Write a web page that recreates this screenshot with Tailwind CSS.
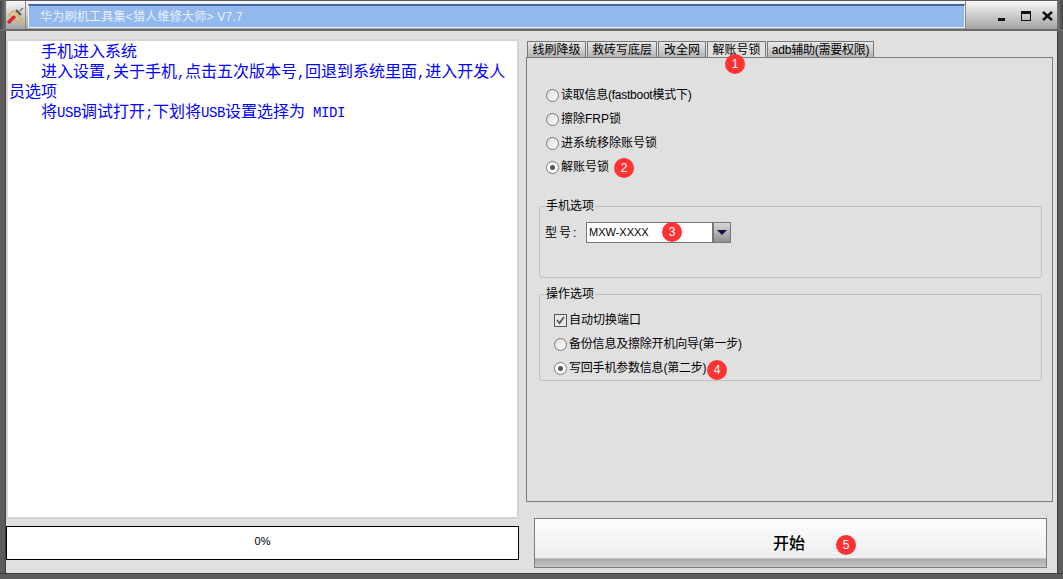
<!DOCTYPE html>
<html lang="zh-CN">
<head>
    <meta charset="UTF-8">
    <title>华为刷机工具集</title>
    <script src="https://cdn.jsdelivr.net/npm/@tailwindcss/browser@4"></script>
</head>
<body class="w-[1063px] h-[579px] overflow-hidden bg-[#5c5c5c] font-['Liberation_Sans','Noto_Sans_CJK_SC',sans-serif] text-[12px] text-black">

<div class="relative w-[1063px] h-[579px] flex flex-col">

    <!-- title bar -->
    <div class="h-[31px] shrink-0 flex border-t border-[#5c5c5c] bg-gradient-to-b from-[#f8f8f8] to-[#a4a4a4] border-b-2 border-b-[#6a6a6a]">
        <div class="w-[6px] bg-gradient-to-r from-[#444] to-[#777]"></div>
        <div class="w-[19px] flex items-center justify-center">
            <svg width="19" height="19" viewBox="0 0 19 19">
                <path d="M3 9 L13 17 L16 14 L7 5 Z" fill="none" stroke="#d8b060" stroke-width="1.6"/>
                <path d="M2 17 L9 10" stroke="#d8262a" stroke-width="3.2"/>
                <path d="M9 10 L12 7" stroke="#e8c070" stroke-width="2.4"/>
                <path d="M10 4 L15 9" stroke="#555" stroke-width="2.2"/>
                <path d="M14 5 L17 2" stroke="#777" stroke-width="1.4"/>
            </svg>
        </div>
        <div class="w-[3px] border-l border-[#888]"></div>
        <div class="w-[937px] h-[24px] mt-[3px] border border-[#eaf1fb] border-t-2 border-t-[#3f68a8] bg-[#92b8ee] flex items-center pl-[11px] text-[12px] tracking-[0.25px] text-[#e8f0fc] leading-none">华为刷机工具集&lt;猎人维修大师&gt; V7.7</div>
        <div class="flex-1 relative border-l border-[#888]">
            <div class="absolute left-[32px] top-[17px] w-[7px] h-[3px] bg-[#111]"></div>
            <div class="absolute left-[55px] top-[10px] w-[10px] h-[10px] border border-[#111] border-t-[3px]"></div>
            <svg class="absolute left-[76px] top-[10px]" width="11" height="10" viewBox="0 0 11 10"><path d="M1 1 L10 9 M10 1 L1 9" stroke="#111" stroke-width="2.4"/></svg>
        </div>
        <div class="w-[6px] bg-gradient-to-r from-[#777] to-[#444]"></div>
    </div>

    <!-- client area -->
    <div class="h-[542px] shrink-0 flex mx-[5px] bg-[#e0e0e0] border-x border-[#3c3c3c]">

        <div class="w-[513px] pt-[8px] flex flex-col">
            <div class="h-[480px] bg-white border-2 border-[#d4d4d8] text-[#0000ff] text-[16px] leading-[20px] pl-[1px] pr-[11px] font-['Noto_Sans_CJK_SC',sans-serif]">
                <p class="indent-[32px] -mt-[1px]">手机进入系统</p>
                <p class="indent-[32px]">进入设置<span class="font-['Liberation_Mono'] text-[14px] leading-none tracking-[-0.4px]">,</span>关于手机<span class="font-['Liberation_Mono'] text-[14px] leading-none tracking-[-0.4px]">,</span>点击五次版本号<span class="font-['Liberation_Mono'] text-[14px] leading-none tracking-[-0.4px]">,</span>回退到系统里面<span class="font-['Liberation_Mono'] text-[14px] leading-none tracking-[-0.4px]">,</span>进入开发人员选项</p>
                <p class="indent-[32px]">将<span class="font-['Liberation_Mono'] text-[14px] leading-none tracking-[-0.4px]">USB</span>调试打开<span class="font-['Liberation_Mono'] text-[14px] leading-none tracking-[-0.4px]">;</span>下划将<span class="font-['Liberation_Mono'] text-[14px] leading-none tracking-[-0.4px]">USB</span>设置选择为<span class="font-['Liberation_Mono'] text-[14px] leading-none tracking-[-0.4px]"> MIDI</span></p>
            </div>
            <div class="mt-[7px] h-[34px] pb-[3px] bg-white border border-black flex items-center justify-center text-[11px]">0%</div>
        </div>

        <div class="w-[529px] ml-[7px] pt-[10px] flex flex-col">
            <div class="flex h-[16px] pl-[1px] gap-[1px] text-[12px] leading-[17px] text-center">
                <div class="w-[59px] bg-gradient-to-b from-[#e8e8e8] to-[#b4b4b4] border border-b-0 border-[#777]">线刷降级</div>
                <div class="w-[70px] bg-gradient-to-b from-[#e8e8e8] to-[#b4b4b4] border border-b-0 border-[#777]">救砖写底层</div>
                <div class="w-[48px] bg-gradient-to-b from-[#e8e8e8] to-[#b4b4b4] border border-b-0 border-[#777]">改全网</div>
                <div class="w-[59px] bg-[#e0e0e0] border border-b-0 border-[#777]">解账号锁</div>
                <div class="w-[107px] bg-gradient-to-b from-[#e8e8e8] to-[#b4b4b4] border border-b-0 border-[#777] tracking-[-0.25px] whitespace-nowrap">adb辅助(需要权限)</div>
            </div>

            <div class="h-[445px] w-[527px] border border-[#7c7c7c] pl-[12px] pr-[10px] pt-[28px]">
                <div class="flex flex-col gap-[6px] pl-[7px]">
                    <label class="h-[18px] flex items-center gap-[2px]">
                        <span class="w-[13px] h-[13px] rounded-full border border-[#777] bg-gradient-to-br from-[#ddd] to-white"></span><span class="tracking-[-0.25px]">读取信息(fastboot模式下)</span>
                    </label>
                    <label class="h-[18px] flex items-center gap-[2px]">
                        <span class="w-[13px] h-[13px] rounded-full border border-[#777] bg-gradient-to-br from-[#ddd] to-white"></span>擦除FRP锁
                    </label>
                    <label class="h-[18px] flex items-center gap-[2px]">
                        <span class="w-[13px] h-[13px] rounded-full border border-[#777] bg-gradient-to-br from-[#ddd] to-white"></span>进系统移除账号锁
                    </label>
                    <label class="h-[18px] flex items-center gap-[2px]">
                        <span class="w-[13px] h-[13px] rounded-full border border-[#777] bg-white flex items-center justify-center"><span class="w-[5px] h-[5px] rounded-full bg-[#555]"></span></span>解账号锁
                    </label>
                </div>

                <fieldset class="mt-[23px] h-[79px] border border-[#c0c0c0] rounded-[3px] pl-[5px]">
                    <legend class="px-[1px] leading-[14px]">手机选项</legend>
                    <div class="flex items-center mt-[9px]">
                        <span class="w-[41px] tracking-[2px]">型号:</span>
                        <div class="w-[145px] h-[21px] flex border border-[#777] bg-white">
                            <span class="flex-1 pl-[2px] leading-[19px] text-[11px]">MXW-XXXX</span>
                            <span class="w-[18px] bg-gradient-to-b from-[#d8d8d8] to-[#909090] border-l-2 border-[#777] flex items-center justify-center">
                                <span class="w-0 h-0 border-x-[5px] border-x-transparent border-t-[5px] border-t-[#10104a]"></span>
                            </span>
                        </div>
                    </div>
                </fieldset>

                <fieldset class="mt-[9px] h-[94px] border border-[#c0c0c0] rounded-[3px] pl-[14px]">
                    <legend class="-ml-[9px] px-[1px] leading-[14px]">操作选项</legend>
                    <div class="flex flex-col gap-[6px] mt-[10px]">
                        <label class="h-[18px] flex items-center gap-[2px]">
                            <span class="w-[13px] h-[13px] border border-[#555] bg-[#e8e8e8] flex items-center justify-center">
                                <svg width="9" height="9" viewBox="0 0 9 9"><path d="M1 4 L3.5 7 L8 1" fill="none" stroke="#555" stroke-width="1.8"/></svg>
                            </span>自动切换端口
                        </label>
                        <label class="h-[18px] flex items-center gap-[2px]">
                            <span class="w-[13px] h-[13px] rounded-full border border-[#777] bg-gradient-to-br from-[#ddd] to-white"></span><span class="tracking-[-0.2px]">备份信息及擦除开机向导(第一步)</span>
                        </label>
                        <label class="h-[18px] flex items-center gap-[2px]">
                            <span class="w-[13px] h-[13px] rounded-full border border-[#777] bg-white flex items-center justify-center"><span class="w-[5px] h-[5px] rounded-full bg-[#555]"></span></span><span class="tracking-[-0.2px]">写回手机参数信息(第二步)</span>
                        </label>
                    </div>
                </fieldset>
            </div>

            <button class="mt-[16px] ml-[8px] w-[513px] h-[50px] border border-[#7c7c7c] bg-[linear-gradient(#fdfdfd,#eeeeee_81%,#aaaaaa_83%,#c4c4c4)] text-[16px] font-medium pr-[3px] pb-[2px] font-['Noto_Sans_CJK_SC',sans-serif] flex items-center justify-center">开始</button>
        </div>
    </div>

    <div class="flex-1 border-t border-[#3c3c3c] bg-[#5c5c5c]"></div>

    <!-- annotation badges -->
    <span class="absolute left-[725px] top-[54px] w-[20px] h-[20px] rounded-full bg-[#f33] text-white text-[12px] leading-[20px] text-center">1</span>
    <span class="absolute left-[614px] top-[158px] w-[20px] h-[20px] rounded-full bg-[#f33] text-white text-[12px] leading-[20px] text-center">2</span>
    <span class="absolute left-[662px] top-[222px] w-[20px] h-[20px] rounded-full bg-[#f33] text-white text-[12px] leading-[20px] text-center">3</span>
    <span class="absolute left-[707px] top-[360px] w-[20px] h-[20px] rounded-full bg-[#f33] text-white text-[12px] leading-[20px] text-center">4</span>
    <span class="absolute left-[836px] top-[535px] w-[20px] h-[20px] rounded-full bg-[#f33] text-white text-[12px] leading-[20px] text-center">5</span>
</div>
</body>
</html>
